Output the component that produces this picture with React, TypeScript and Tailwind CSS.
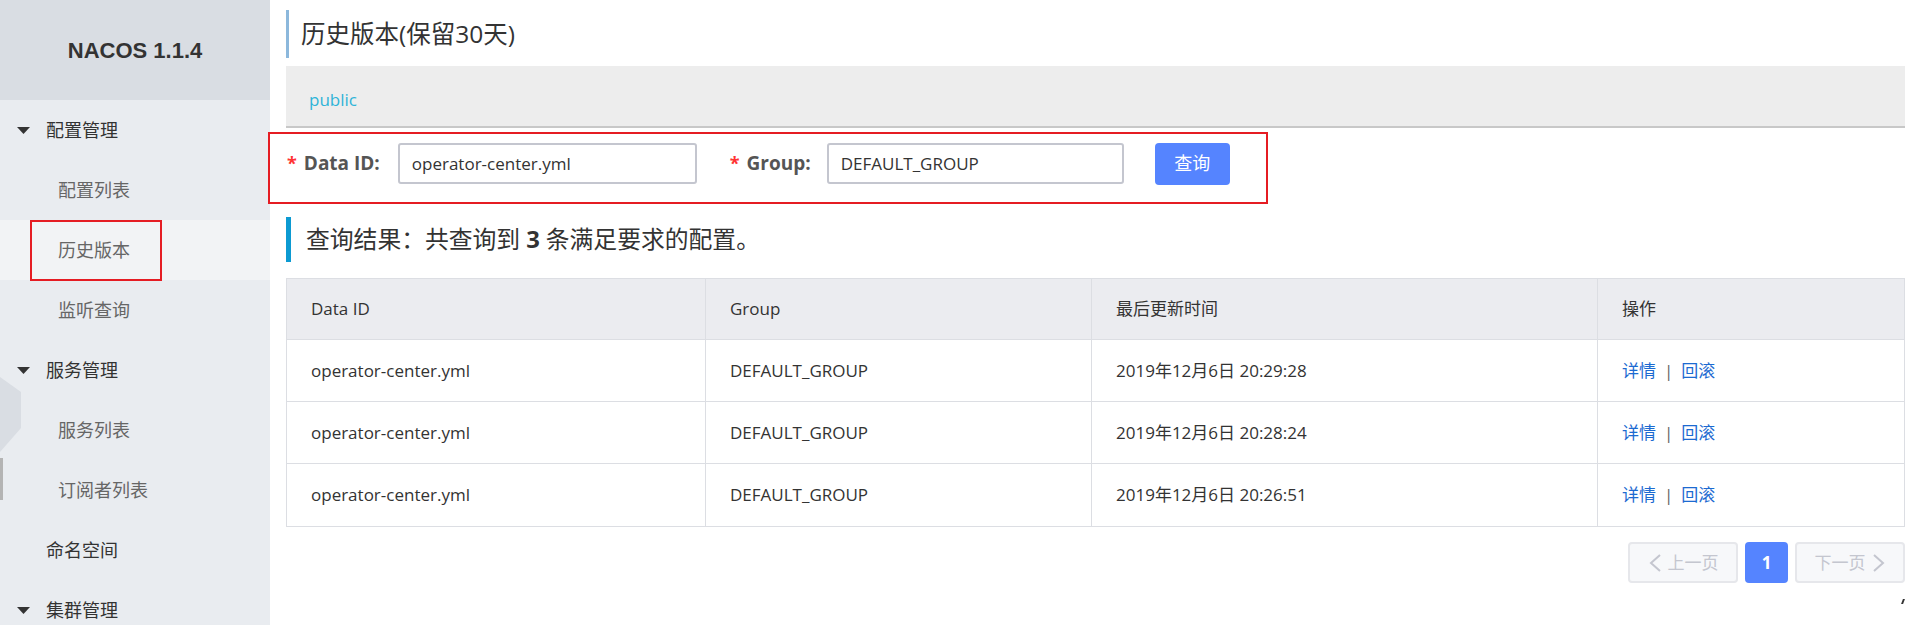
import React from "react";

const Caret = () => (
  <svg width="13" height="7" viewBox="0 0 13 7" className="shrink-0">
    <polygon points="0,0 13,0 6.5,7" fill="#333" />
  </svg>
);

const Group = ({ label }: { label: string }) => (
  <div className="h-[60px] flex items-center pl-[17px] text-[#333]">
    <Caret />
    <span className="ml-[16px]">{label}</span>
  </div>
);

const Sub = ({ label, active }: { label: string; active?: boolean }) => (
  <div
    className={
      "h-[60px] flex items-center pl-[58px] text-[#666] " +
      (active ? "bg-[#f2f3f5]" : "")
    }
  >
    {label}
  </div>
);

const rows = [
  "2019年12月6日 20:29:28",
  "2019年12月6日 20:28:24",
  "2019年12月6日 20:26:51",
];

const ChevL = () => (
  <svg width="14" height="20" viewBox="0 0 14 20" className="shrink-0">
    <polyline points="12,2 3,10 12,18" fill="none" stroke="#c4c6cf" strokeWidth="2" />
  </svg>
);
const ChevR = () => (
  <svg width="14" height="20" viewBox="0 0 14 20" className="shrink-0">
    <polyline points="2,2 11,10 2,18" fill="none" stroke="#c4c6cf" strokeWidth="2" />
  </svg>
);

export default function App() {
  return (
    <div className="relative flex w-[1921px] h-[625px] overflow-hidden bg-white font-['Open_Sans','Noto_Sans_CJK_SC',sans-serif]">
      <aside className="relative w-[270px] shrink-0 bg-[#e9ecf0] text-[18px]">
        <div className="h-[100px] bg-[#d9dde3] flex items-center justify-center text-[22px] font-bold text-[#333] font-['Liberation_Sans',sans-serif]">
          NACOS 1.1.4
        </div>
        <Group label="配置管理" />
        <Sub label="配置列表" />
        <Sub label="历史版本" active />
        <Sub label="监听查询" />
        <Group label="服务管理" />
        <Sub label="服务列表" />
        <Sub label="订阅者列表" />
        <div className="h-[60px] flex items-center pl-[46px] text-[#333]">命名空间</div>
        <Group label="集群管理" />

        <div className="absolute left-[30px] top-[220px] w-[132px] h-[61px] border-2 border-[#e51c23]" />
        <svg className="absolute left-0 top-[377px]" width="21" height="75" viewBox="0 0 21 75">
          <polygon points="0,0 21,15 21,51 0,75" fill="#d9dde3" />
        </svg>
        <div className="absolute left-0 top-[458px] w-[3px] h-[42px] bg-[#b4b4b4]" />
      </aside>

      <main className="flex-1 px-4 pt-[10px] min-w-0">
        <div className="h-[48px] border-l-[3px] border-[#8cb8dc] pl-[12px] flex items-center text-[24.5px] text-[#333]">
          历史版本(保留30天)
        </div>

        <div className="mt-[8px] h-[62px] bg-[#ededed] border-b-2 border-[#c8c8c8] pl-[23px] pt-[8px] flex items-center text-[17px] text-[#2fb4d8]">
          public
        </div>

        <div className="relative mt-[15px] h-[41px] flex items-center">
          <div className="absolute left-[-18px] top-[-11px] w-[1000px] h-[72px] border-2 border-[#e51c23]" />
          <span className="ml-[1px] text-[#f33] text-[18px] font-bold">*</span>
          <span className="ml-[7px] text-[19px] font-bold text-[#555]">Data ID:</span>
          <div className="ml-[18px] w-[299px] h-[41px] border-2 border-[#c4c6cf] rounded-[3px] pl-[12px] flex items-center text-[17px] text-[#333]">
            operator-center.yml
          </div>
          <span className="ml-[33px] text-[#f33] text-[18px] font-bold">*</span>
          <span className="ml-[7px] text-[19px] font-bold text-[#555]">Group:</span>
          <div className="ml-[16px] w-[297px] h-[41px] border-2 border-[#c4c6cf] rounded-[3px] pl-[12px] flex items-center text-[17px] text-[#333]">
            DEFAULT_GROUP
          </div>
          <div className="ml-[31px] w-[75px] h-[42px] bg-[#5584ff] rounded-[4px] flex items-center justify-center text-white text-[18px]">
            查询
          </div>
        </div>

        <div className="mt-[33px] h-[45px] border-l-[5px] border-[#0c9ad2] pl-[15px] flex items-center text-[23.8px] text-[#333]">
          查询结果：共查询到 <b className="mx-[6px]">3</b> 条满足要求的配置。
        </div>

        <div className="mt-[16px] border border-[#dcdee3] text-[17px] text-[#333]">
          <div className="grid grid-cols-[419px_386px_506px_1fr] h-[61px] bg-[#ebecf0] border-b border-[#dcdee3]">
            <div className="flex items-center pl-[24px] border-r border-[#dcdee3]">Data ID</div>
            <div className="flex items-center pl-[24px] border-r border-[#dcdee3]">Group</div>
            <div className="flex items-center pl-[24px] border-r border-[#dcdee3]">最后更新时间</div>
            <div className="flex items-center pl-[24px]">操作</div>
          </div>
          {rows.map((t, i) => (
            <div
              key={i}
              className={
                "grid grid-cols-[419px_386px_506px_1fr] h-[62px] " +
                (i < rows.length - 1 ? "border-b border-[#dcdee3]" : "")
              }
            >
              <div className="flex items-center pl-[24px] border-r border-[#dcdee3]">operator-center.yml</div>
              <div className="flex items-center pl-[24px] border-r border-[#dcdee3]">DEFAULT_GROUP</div>
              <div className="flex items-center pl-[24px] border-r border-[#dcdee3]">{t}</div>
              <div className="flex items-center pl-[24px]">
                <span className="text-[#1c6ad1]">详情</span>
                <span className="mx-[8px] text-[#666]">|</span>
                <span className="text-[#1c6ad1]">回滚</span>
              </div>
            </div>
          ))}
        </div>

        <div className="mt-[15px] flex justify-end gap-[7px] text-[17px]">
          <div className="w-[110px] h-[41px] bg-[#f7f8fa] border-2 border-[#e6e7eb] rounded-[4px] flex items-center justify-center gap-[6px] text-[#c4c6cf]">
            <ChevL />
            <span>上一页</span>
          </div>
          <div className="w-[43px] h-[41px] bg-[#5584ff] rounded-[4px] flex items-center justify-center text-white font-bold">
            1
          </div>
          <div className="w-[110px] h-[41px] bg-[#f7f8fa] border-2 border-[#e6e7eb] rounded-[4px] flex items-center justify-center gap-[6px] text-[#c4c6cf]">
            <span>下一页</span>
            <ChevR />
          </div>
        </div>
      </main>

      <div className="absolute left-[1902px] top-[599px] w-[2px] h-[5px] bg-[#333] skew-x-[-20deg]" />
    </div>
  );
}
